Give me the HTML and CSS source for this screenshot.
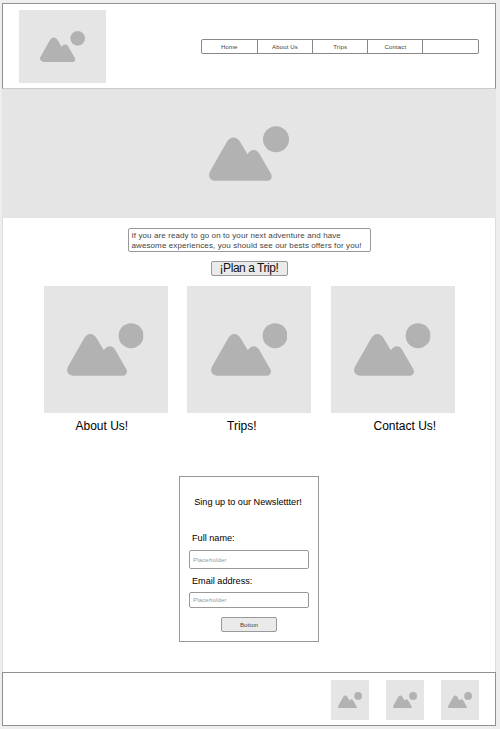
FILE: index.html
```
<!DOCTYPE html>
<html lang="en">
<head>
<meta charset="utf-8">
<title>Travel</title>
<link rel="stylesheet" href="styles.css">
</head>
<body>
<svg class="defs" width="0" height="0" aria-hidden="true">
  <symbol id="photo" viewBox="0 0 80 55" preserveAspectRatio="none">
    <circle cx="67" cy="13.2" r="13"/>
    <path d="M7 54.800C1.200 54.800 -1.500 50 1 45.500L17.500 16.500C21.500 9.700 27.500 9.700 31.500 16.500L38.500 28.300C42 22.800 47 22.800 50.200 27.500L61.800 47.500C64 51.500 62 54.800 58 54.800Z"/>
  </symbol>
</svg>
<div class="page">
  <header class="header">
    <div class="photo logo"><svg><use href="#photo"/></svg></div>
    <nav class="nav"><a>Home</a><a>About Us</a><a>Trips</a><a>Contact</a><a></a></nav>
  </header>
  <div class="photo hero"><svg><use href="#photo"/></svg></div>
  <main class="main">
    <p class="intro">If you are ready to go on to your next adventure and have<br>awesome experiences, you should see our bests offers for you!</p>
    <button class="plan">¡Plan a Trip!</button>
    <section class="cards">
      <article class="card"><div class="photo"><svg><use href="#photo"/></svg></div><h2 class="about">About Us!</h2></article>
      <article class="card"><div class="photo"><svg><use href="#photo"/></svg></div><h2 class="trips">Trips!</h2></article>
      <article class="card"><div class="photo"><svg><use href="#photo"/></svg></div><h2 class="contact">Contact Us!</h2></article>
    </section>
    <form class="newsletter">
      <h3>Sing up to our Newslettter!</h3>
      <label>Full name:</label>
      <div class="field">Placeholder</div>
      <label class="email">Email address:</label>
      <div class="field short">Placeholder</div>
      <button type="button" class="submit">Button</button>
    </form>
  </main>
  <footer class="footer">
    <div class="photo"><svg><use href="#photo"/></svg></div>
    <div class="photo"><svg><use href="#photo"/></svg></div>
    <div class="photo"><svg><use href="#photo"/></svg></div>
  </footer>
</div>
</body>
</html>
```
FILE: styles.css
```
* { box-sizing: border-box; }
body {
  margin: 0;
  background: #eee;
  font-family: "Liberation Sans", Arial, sans-serif;
  color: #000;
}
h2, h3, p { margin: 0; font-weight: 400; }
button { font-family: inherit; padding: 0; }
.defs { display: block; }
.page {
  width: 494px;
  height: 723px;
  margin: 3px 0 0 2px;
  background: #fff;
  display: flex;
  flex-direction: column;
}
.photo { background: #e5e5e5; display: flex; }
.photo svg { display: block; fill: #b2b2b2; flex: none; }
.header {
  height: 86px;
  flex: none;
  border: 1px solid #919191;
  border-bottom-color: #ccc;
  display: flex;
  justify-content: space-between;
  padding: 6px 16px 0 16px;
}
.logo { width: 87px; height: 73px; padding: 21px 0 0 21px; }
.logo svg { width: 45px; height: 31px; }
.nav {
  width: 278px;
  height: 15px;
  margin-top: 29px;
  border: 1px solid #888;
  border-radius: 2px;
  display: grid;
  grid-template-columns: repeat(5, 1fr);
}
.nav a {
  font-size: 6.100px;
  letter-spacing: 0.100px;
  line-height: 13px;
  text-align: center;
  color: #444;
  margin-left: -0.700px;
  border-left: 1px solid #888;
}
.nav a:first-child { border-left: 0; }
.hero { height: 129px; flex: none; padding: 37px 0 0 207px; }
.hero svg { width: 80px; height: 55px; }
.main {
  height: 454px;
  flex: none;
  border: solid #ddd;
  border-width: 0 1px;
  display: flex;
  flex-direction: column;
  align-items: center;
}
.intro {
  width: 243px;
  height: 24px;
  margin: 10px 0 0 0;
  padding: 2px 0 0 3px;
  border: 1px solid #999;
  border-radius: 2px;
  font-size: 8px;
  letter-spacing: 0.100px;
  line-height: 10px;
  white-space: nowrap;
  color: #444;
}
.plan {
  width: 77px;
  height: 15px;
  margin-top: 9px;
  border: 1px solid #999;
  border-radius: 2px;
  background: #eaeaea;
  font-size: 12px;
  letter-spacing: -0.450px;
  line-height: 13px;
  color: #111;
}
.cards {
  display: grid;
  grid-template-columns: repeat(3, 124px);
  gap: 19.500px;
  margin-top: 10px;
}
.card .photo { height: 126.500px; padding: 37px 0 0 23.500px; }
.card svg { width: 76.500px; height: 53px; }
.card h2 { font-size: 12px; line-height: 14px; margin-top: 6px; white-space: nowrap; }
.about { padding-left: 32px; }
.trips { padding-left: 40px; }
.contact { padding-left: 43px; }
.newsletter {
  width: 140px;
  height: 166px;
  margin-top: 43.500px;
  padding: 20px 9px 0;
  border: 1px solid #999;
  display: flex;
  flex-direction: column;
}
.newsletter h3 { font-size: 9.150px; line-height: 11px; text-align: center; white-space: nowrap; margin-left: -2px; }
.newsletter label { font-size: 9.150px; line-height: 11px; margin: 25px 0 0 3px; }
.newsletter .email { margin-top: 7px; }
.field {
  height: 19px;
  margin-top: 6px;
  padding-left: 3px;
  border: 1px solid #999;
  border-radius: 2px;
  font-size: 6.100px;
  letter-spacing: 0.130px;
  line-height: 17px;
  color: #999;
}
.short { height: 16px; margin-top: 5px; line-height: 14px; }
.submit {
  width: 56px;
  height: 15px;
  margin-top: 9px;
  align-self: center;
  border: 1px solid #999;
  border-radius: 2px;
  background: #eaeaea;
  font-size: 6.100px;
  letter-spacing: 0.100px;
  line-height: 13px;
  color: #444;
}
.footer {
  height: 54px;
  flex: none;
  border: 1px solid #919191;
  display: flex;
  justify-content: flex-end;
  gap: 17px;
  padding: 7px 16px 0 0;
}
.footer .photo { width: 38px; height: 39.500px; padding: 11.500px 0 0 7px; }
.footer svg { width: 24px; height: 16.500px; }
```
